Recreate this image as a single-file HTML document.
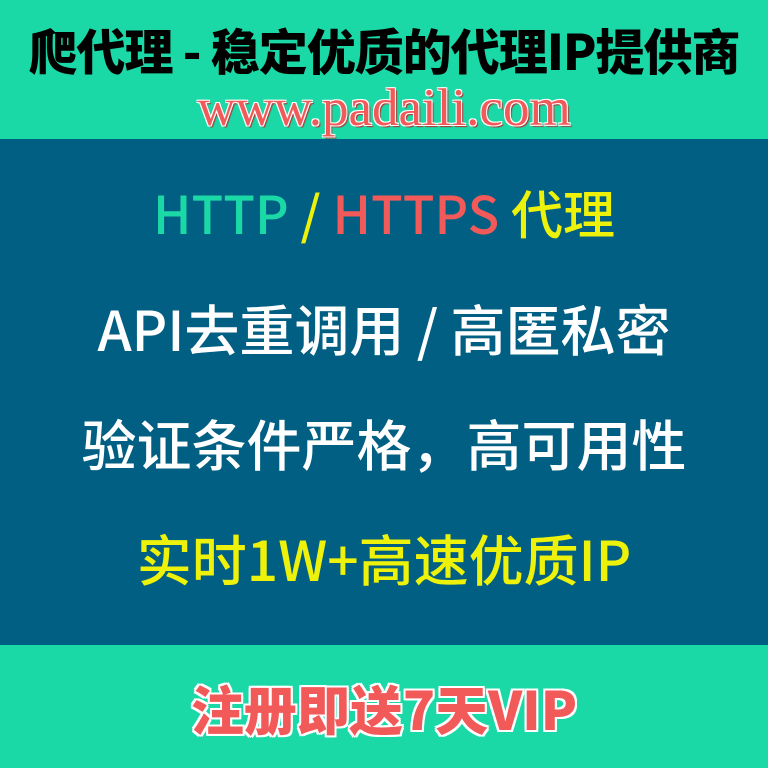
<!DOCTYPE html>
<html><head><meta charset="utf-8"><style>
body{margin:0;width:768px;height:768px;overflow:hidden;background:#1ad9a6;font-family:"Noto Sans CJK SC",sans-serif}
.t{position:absolute;left:0;width:768px;text-align:center;white-space:nowrap}
#mid{position:absolute;left:0;top:139px;width:768px;height:506px;background:#005f82}
.m{font-size:55px;font-weight:500;line-height:64px;color:#fff}
</style></head><body>
<div class="t" style="top:20px;font-size:49px;font-weight:900;line-height:60px;color:#000;letter-spacing:-1px;font-family:'Noto Sans CJK SC','WenQuanYi Zen Hei',sans-serif">爬代理 - 稳定优质的代理IP提供商</div>
<div class="t" style="top:80px;font-size:53px;line-height:56px;color:#f25a5a;font-family:'Liberation Serif',serif;text-shadow:-1px -1px 0 #fff,1px -1px 0 #fff,-1px 1px 0 #fff,1px 1px 0 #fff,2px 2px 1px #b03030">www.padaili.com</div>
<div id="mid"></div>
<div class="t m" style="top:180px;font-size:52px"><span style="color:#1ad9a6">HTTP</span> <span style="color:#eef20a">/</span> <span style="color:#f25a5a">HTTPS</span> <span style="color:#eef20a">代理</span></div>
<div class="t m" style="top:295px">API去重调用 / 高匿私密</div>
<div class="t m" style="top:410px">验证条件严格，高可用性</div>
<div class="t m" style="top:525px;color:#eef20a">实时1W+高速优质IP</div>
<div class="t" style="top:676px;font-size:53px;font-weight:900;line-height:64px;color:#f25a5a;text-shadow:-2px -2px 0 #fff,2px -2px 0 #fff,-2px 2px 0 #fff,2px 2px 0 #fff,0 2px 0 #fff,2px 0 0 #fff,-2px 0 0 #fff,0 -2px 0 #fff">注册即送7天VIP</div>
</body></html>
